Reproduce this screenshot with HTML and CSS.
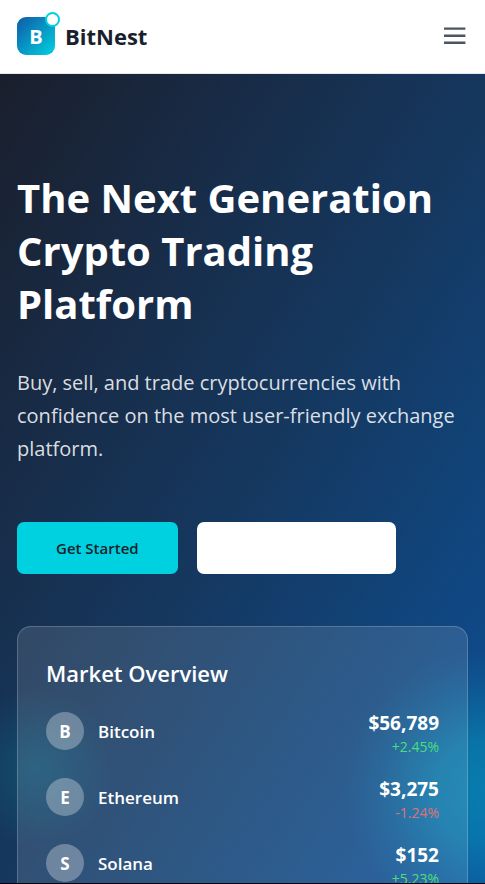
FILE: index.html
```html
<!DOCTYPE html>
<html lang="en">
<head>
<meta charset="utf-8">
<meta name="viewport" content="width=device-width, initial-scale=1">
<title>BitNest</title>
<link rel="stylesheet" href="styles.css">
</head>
<body>
<div class="page">
  <header class="navbar">
    <a class="brand" href="#">
      <span class="logo">B<span class="logo-dot"></span></span>
      <span class="brand-name">BitNest</span>
    </a>
    <button class="menu-button" type="button" aria-label="Open menu">
      <svg viewBox="0 0 26 26" width="26" height="26" fill="none" stroke="#4b5563" stroke-width="2.4" aria-hidden="true">
        <path d="M2 5.6h21.4M2 12.7h21.4M2 19.8h21.4"/>
      </svg>
    </button>
  </header>
  <main class="hero">
    <h1 class="title">The Next Generation Crypto Trading Platform</h1>
    <p class="lead">Buy, sell, and trade cryptocurrencies with confidence on the most user-friendly exchange platform.</p>
    <div class="actions">
      <button class="button button-primary" type="button">Get Started</button>
      <button class="button button-light" type="button" aria-label="Explore Markets"></button>
    </div>
    <section class="market" aria-labelledby="market-title">
      <h2 class="market-title" id="market-title">Market Overview</h2>
      <ul class="coins">
        <li class="coin">
          <span class="coin-icon">B</span>
          <span class="coin-name">Bitcoin</span>
          <span class="quote"><span class="price">$56,789</span><span class="change up">+2.45%</span></span>
        </li>
        <li class="coin">
          <span class="coin-icon">E</span>
          <span class="coin-name">Ethereum</span>
          <span class="quote"><span class="price">$3,275</span><span class="change down">-1.24%</span></span>
        </li>
        <li class="coin">
          <span class="coin-icon">S</span>
          <span class="coin-name">Solana</span>
          <span class="quote"><span class="price">$152</span><span class="change up">+5.23%</span></span>
        </li>
      </ul>
    </section>
  </main>
</div>
</body>
</html>
```
FILE: styles.css
```css
* {
  box-sizing: border-box;
}

body {
  margin: 0;
  font-family: "Segoe UI", "Open Sans", "Noto Sans", sans-serif;
  color: #fff;
  background: #fff;
}

button {
  font-family: inherit;
  border: 0;
  cursor: pointer;
}

.page {
  display: flex;
  flex-direction: column;
  height: 100vh;
  overflow: hidden;
  border-bottom: 1px solid #000;
}

.navbar {
  display: flex;
  flex-shrink: 0;
  align-items: center;
  justify-content: space-between;
  padding: 17px 17px 18px;
  background: #fff;
  border-bottom: 1px solid #e5e7eb;
}

.brand {
  display: flex;
  align-items: center;
  gap: 10px;
  color: #1a1f2c;
  text-decoration: none;
}

.logo {
  position: relative;
  display: grid;
  place-items: center;
  width: 38px;
  height: 38px;
  border-radius: 9px;
  background: linear-gradient(135deg, #0f5ba8, #00d1e0);
  color: #fff;
  font-size: 20px;
  font-weight: 700;
}

.logo-dot {
  position: absolute;
  top: -5px;
  right: -5px;
  width: 15px;
  height: 15px;
  border: 2px solid #00d1e0;
  border-radius: 50%;
  background: #fff;
}

.brand-name {
  font-size: 22px;
  line-height: 30px;
  font-weight: 700;
}

.menu-button {
  display: grid;
  padding: 0;
  background: none;
}

.hero {
  position: relative;
  flex: 1;
  min-height: 0;
  padding: 97px 17px 0;
  background:
    radial-gradient(circle at 100% 716px, rgba(0, 190, 214, 0.42), rgba(0, 190, 214, 0.34) 50px, rgba(0, 190, 214, 0.1) 105px, rgba(0, 190, 214, 0) 140px),
    radial-gradient(circle at 36px 694px, rgba(0, 190, 214, 0.18), rgba(0, 190, 214, 0.08) 45px, rgba(0, 190, 214, 0) 80px),
    linear-gradient(122deg, #1a1f2c, #182b46 25%, #153860 52%, #10467f 78%, #0d509a);
}

.title {
  margin: 0;
  font-size: 40px;
  line-height: 53px;
  font-weight: 700;
}

.lead {
  margin: 36px 0 0;
  color: rgba(255, 255, 255, 0.85);
  font-size: 20px;
  line-height: 33px;
}

.actions {
  display: flex;
  gap: 19px;
  margin-top: 57px;
}

.button {
  height: 52px;
  padding: 0 39px;
  border-radius: 7px;
  font-size: 15px;
  font-weight: 600;
}

.button-primary {
  background: #00d1e0;
  color: #1a1f2c;
}

.button-light {
  width: 199px;
  background: #fff;
}

.market {
  margin-top: 52px;
  padding: 28px;
  border: 1px solid rgba(255, 255, 255, 0.2);
  border-radius: 14px;
  background: rgba(255, 255, 255, 0.12);
}

.market-title {
  margin: 0;
  font-size: 22px;
  line-height: 36px;
  font-weight: 600;
}

.coins {
  display: grid;
  gap: 18px;
  margin: 16px 0 0;
  padding: 0;
  list-style: none;
}

.coin {
  display: flex;
  align-items: center;
  height: 48px;
}

.coin-icon {
  display: grid;
  place-items: center;
  width: 38px;
  height: 38px;
  margin-right: 14px;
  border-radius: 50%;
  background: rgba(255, 255, 255, 0.3);
  font-size: 17px;
  font-weight: 700;
}

.coin-name {
  font-size: 17px;
  font-weight: 600;
}

.quote {
  display: grid;
  margin-left: auto;
  padding-top: 4px;
  text-align: right;
}

.price {
  font-size: 19px;
  line-height: 28px;
  font-weight: 700;
}

.change {
  font-size: 14px;
  line-height: 20px;
}

.up {
  color: #4ade80;
}

.down {
  color: #e07078;
}
```
